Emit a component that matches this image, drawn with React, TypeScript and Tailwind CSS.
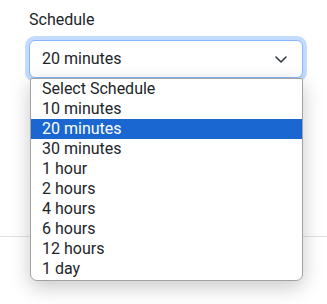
import React from "react";

const options = [
  "Select Schedule",
  "10 minutes",
  "20 minutes",
  "30 minutes",
  "1 hour",
  "2 hours",
  "4 hours",
  "6 hours",
  "12 hours",
  "1 day",
];

export default function App() {
  return (
    <div className="relative w-[327px] h-[304px] overflow-hidden bg-white text-[#212529] font-['Roboto','Liberation_Sans',sans-serif]">
      <div className="pt-[8px]">
        <div className="ml-[29px] mb-[8px] text-[16px] leading-[24px]">Schedule</div>
        <div className="ml-[29px] w-[274px] h-[38px] flex items-center justify-between pl-[12px] pr-[15px] bg-white border border-[#86b7fe] rounded-[6px] shadow-[0_0_0_4px_rgba(13,110,253,0.25)] text-[16px] leading-[24px]">
          <span>20 minutes</span>
          <svg width="12" height="7" viewBox="0 0 12 7" fill="none">
            <path d="M1 1l5 5 5-5" stroke="#343a40" strokeWidth="1.6" strokeLinecap="round" strokeLinejoin="round" />
          </svg>
        </div>
        <div className="mt-[158px] border-t border-[#dee2e6]" />
      </div>

      <div className="absolute left-[30px] top-[78px] w-[273px] bg-white border border-[#a3a3a3] rounded-b-[7px] rounded-t-[2px] shadow-[0_6px_20px_rgba(0,0,0,0.22)] pb-[1px]">
        {options.map((o) => (
          <div
            key={o}
            className={
              o === "20 minutes"
                ? "h-[20px] pl-[11px] text-[16px] leading-[20px] bg-[#1a67d2] text-white"
                : "h-[20px] pl-[11px] text-[16px] leading-[20px] text-[#212529]"
            }
          >
            {o}
          </div>
        ))}
      </div>
    </div>
  );
}
